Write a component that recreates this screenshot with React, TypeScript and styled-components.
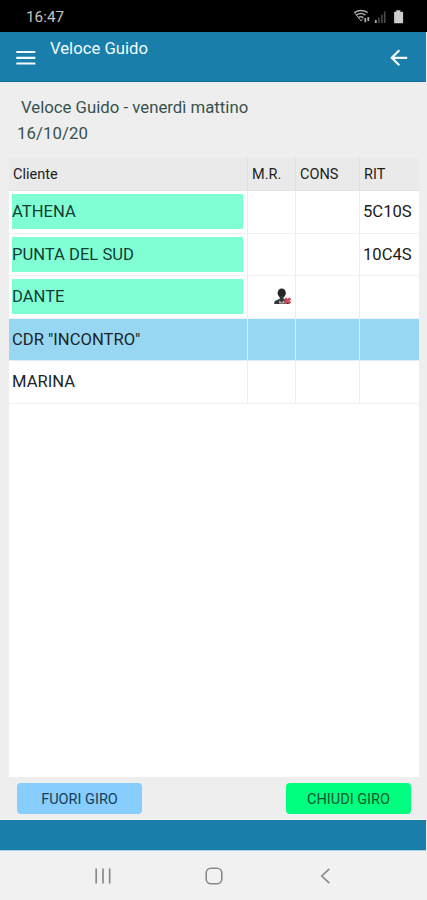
import React from "react";
import styled, { createGlobalStyle } from "styled-components";

const GlobalStyle = createGlobalStyle`
  * { box-sizing: border-box; }
  body { margin: 0; background: #efefef; font-family: Roboto, "Liberation Sans", sans-serif; }
`;

const Screen = styled.div`
  width: 427px;
  height: 900px;
  display: flex;
  flex-direction: column;
  overflow: hidden;
  background: #eeeeee;
`;

const StatusBar = styled.div`
  height: 32px;
  flex: none;
  display: flex;
  align-items: center;
  justify-content: space-between;
  padding: 2px 22px 0 26px;
  background: #000;
  color: #c4c4c4;
`;

const Clock = styled.span`
  font-size: 15.3px;
  line-height: 20px;
`;

const StatusIcons = styled.div`
  display: flex;
  align-items: center;
  svg { display: block; }
`;

const Header = styled.header`
  height: 50px;
  flex: none;
  display: flex;
  padding: 0 18px 0 16px;
  margin-right: 1px;
  background: #1a7eab;
  border-bottom: 1px solid #12719c;
  color: #f1fbff;
  svg { display: block; margin-top: 16px; }
`;

const Title = styled.h1`
  margin: 7px auto 0 14px;
  font-size: 16.7px;
  font-weight: 400;
  line-height: 20px;
`;

const Intro = styled.div`
  height: 76px;
  flex: none;
  padding: 12px 0 0 17px;
  color: #37524d;
  font-size: 16.75px;
  line-height: 26px;
`;

const Tour = styled.div`
  padding-left: 4px;
`;

const TourDate = styled.div`
  letter-spacing: 0.1px;
`;

const Table = styled.section`
  flex: none;
  height: 619px;
  margin: 0 8px 0 9px;
  background: #fff;
`;

const columns = "239px 48px 64px 59px";

const HeadRow = styled.div`
  display: grid;
  grid-template-columns: ${columns};
  height: 33px;
  background: #eaeaea;
  border-bottom: 1px solid #e4e4e4;
`;

const HeadCell = styled.div`
  padding-left: 4px;
  border-right: 1px solid #dfdfdf;
  color: #1d1d1d;
  font-size: 14.5px;
  line-height: 34px;
  &:last-child { border-right: 0; }
`;

const Row = styled.div<{ $selected?: boolean }>`
  display: grid;
  grid-template-columns: ${columns};
  height: 42.5px;
  background: ${(p) => (p.$selected ? "#98d7f1" : "#fff")};
  border-bottom: 1px solid ${(p) => (p.$selected ? "#dceff8" : "#f1f1f1")};
`;

const Cell = styled.div<{ $selected?: boolean }>`
  border-right: 1px solid ${(p) => (p.$selected ? "#d6edf8" : "#ededed")};
  padding-left: 3px;
  color: #191919;
  font-size: 16.6px;
  line-height: 42px;
  white-space: nowrap;
  &:last-child { border-right: 0; }
`;

const NameCell = styled(Cell)`
  padding: 3px 4px 3px 3px;
`;

const Name = styled.div<{ $done?: boolean }>`
  height: 35px;
  font-size: 16.6px;
  line-height: 36px;
  background: ${(p) => (p.$done ? "#80ffd4" : "transparent")};
  color: ${(p) => (p.$done ? "#123c30" : "#1b2429")};
`;

const AbsentIcon = styled.svg`
  display: block;
  margin: 12px 0 0 22px;
`;

const Actions = styled.div`
  height: 43px;
  flex: none;
  display: flex;
  justify-content: space-between;
  padding: 6px 16px 0 17px;
  border-bottom: 1px solid #f8f8f8;
`;

const Button = styled.button<{ $bg: string; $color: string }>`
  width: 125px;
  height: 31px;
  padding: 2px 0 0;
  border: 0;
  border-radius: 4px;
  background: ${(p) => p.$bg};
  color: ${(p) => p.$color};
  font: 400 14.5px/29px Roboto, "Liberation Sans", sans-serif;
`;

const Footer = styled.footer`
  height: 31px;
  flex: none;
  margin-right: 1px;
  background: #1a7eab;
  border-bottom: 1px solid #a9cfe0;
`;

const NavBar = styled.nav`
  flex: 1;
  display: grid;
  grid-template-columns: 111px 115px 11px;
  align-items: center;
  justify-content: center;
  padding-right: 2px;
  background: #f1f1f1;
  svg { display: block; }
`;

const visits = [
  { name: "ATHENA", done: true, rit: "5C10S" },
  { name: "PUNTA DEL SUD", done: true, rit: "10C4S" },
  { name: "DANTE", done: true, absent: true },
  { name: 'CDR "INCONTRO"', selected: true },
  { name: "MARINA" },
];

const Absent = () => (
  <AbsentIcon width="19" height="18" viewBox="0 0 19 18">
    <ellipse cx="8.7" cy="5" rx="4.1" ry="4.6" fill="#262626" />
    <path d="M6.8 8h3.8v3l4 1.6c1 .4 1.4 1.2 1.4 3.4H1.2c0-2.4.5-3.2 1.6-3.6l4-1.6z" fill="#363636" />
    <path d="M6.2 12.2l2.5 2 2.5-2 .8 3.4H6z" fill="#aaa" />
    <path d="M12 10.3l5.3 5M17.3 10.3l-5.3 5" stroke="#d34b57" strokeWidth="2.7" />
  </AbsentIcon>
);

export default function App() {
  return (
    <>
      <GlobalStyle />
      <Screen>
        <StatusBar>
          <Clock>16:47</Clock>
          <StatusIcons>
            <svg width="54" height="16" viewBox="0 0 54 16" fill="none" stroke="#a9a9a9">
              <path d="M3.4 3.6Q10-.8 16.6 3.6M5.2 6.2Q10 3 14.4 6.2M7.2 8.6Q10 6.8 12.4 8.6" strokeWidth="1.5" />
              <path d="M3.4 3.6l6.6 8.3 2-2.4" strokeWidth="1" />
              <path d="M14.3 9v4.2M17.3 8v4" strokeWidth="1.8" />
              <path d="M24.8 11v3" strokeWidth="1.8" />
              <path d="M27.9 8.5V14M30.9 5.5V14M33.7 2.5V14" stroke="#4a4a4a" strokeWidth="1.6" />
              <path d="M45.3 1.2h4v1.5h1.8c.7 0 1 .3 1 1v9.6c0 .7-.3 1-1 1h-7c-.7 0-1-.3-1-1V3.7c0-.7.3-1 1-1h1.2z" fill="#cdcdcd" stroke="none" />
            </svg>
          </StatusIcons>
        </StatusBar>
        <Header>
          <svg width="20" height="18" viewBox="0 0 20 18" stroke="currentColor" strokeWidth="2.2">
            <path d="M.3 4H19.3M.3 9.8H19.3M.3 15.5H19.3" />
          </svg>
          <Title>Veloce Guido</Title>
          <svg width="18" height="19" viewBox="0 0 18 19" fill="none" stroke="currentColor" strokeWidth="2.2">
            <path d="M17.2 9.8H2.2M9.3 2.2L1.8 9.8l7.5 7.4" />
          </svg>
        </Header>
        <Intro>
          <Tour>Veloce Guido - venerdì mattino</Tour>
          <TourDate>16/10/20</TourDate>
        </Intro>
        <Table>
          <HeadRow>
            <HeadCell>Cliente</HeadCell>
            <HeadCell>M.R.</HeadCell>
            <HeadCell>CONS</HeadCell>
            <HeadCell>RIT</HeadCell>
          </HeadRow>
          {visits.map((v) => (
            <Row key={v.name} $selected={v.selected}>
              <NameCell $selected={v.selected}>
                <Name $done={v.done}>{v.name}</Name>
              </NameCell>
              <Cell $selected={v.selected}>{v.absent && <Absent />}</Cell>
              <Cell $selected={v.selected} />
              <Cell>{v.rit}</Cell>
            </Row>
          ))}
        </Table>
        <Actions>
          <Button $bg="#87ceff" $color="#163d58">FUORI GIRO</Button>
          <Button $bg="#00ff7f" $color="#07582c">CHIUDI GIRO</Button>
        </Actions>
        <Footer />
        <NavBar>
          <svg width="18" height="18" viewBox="0 0 18 18" stroke="#8a8a8a" strokeWidth="1.7">
            <path d="M2.2 1.5v15M9 1.5v15M15.7 1.5v15" />
          </svg>
          <svg width="18" height="18" viewBox="0 0 18 18" fill="none" stroke="#8a8a8a" strokeWidth="1.6">
            <rect x="1.2" y="1.2" width="15.6" height="15.6" rx="4.8" />
          </svg>
          <svg width="11" height="18" viewBox="0 0 11 18" fill="none" stroke="#8a8a8a" strokeWidth="1.7">
            <path d="M9.3 1.8L1.8 9l7.5 7.2" />
          </svg>
        </NavBar>
      </Screen>
    </>
  );
}
